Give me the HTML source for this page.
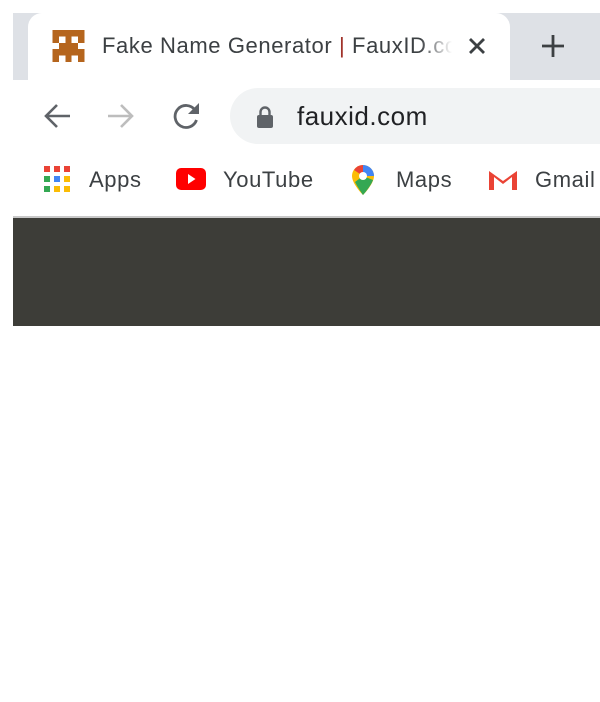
<!DOCTYPE html>
<html><head><style>
body{margin:0;width:600px;height:702px;background:#fff;position:relative;overflow:hidden;font-family:"Liberation Sans",sans-serif;}
.a{position:absolute}
.t{color:#3c4043;font-size:22px;white-space:nowrap;letter-spacing:0.6px}
</style></head><body>
<div class="a" style="left:13px;top:13px;width:587px;height:67px;background:#dee1e6"></div>
<div class="a" style="left:28px;top:13px;width:482px;height:67px;background:#fff;border-radius:14px 14px 0 0"></div>
<div class="a" style="left:13px;top:13px;width:15px;height:67px;background:#dee1e6;border-radius:0 0 14px 0"></div>
<div class="a" style="left:510px;top:13px;width:90px;height:67px;background:#dee1e6;border-radius:0 0 0 14px"></div>
<svg class="a" style="left:52px;top:30px" width="33" height="32" viewBox="0 0 5 5" shape-rendering="crispEdges"><g fill="#b5651d"><rect x="0" y="0" width="5" height="1"/><rect x="0" y="1" width="1" height="1"/><rect x="2" y="1" width="1" height="1"/><rect x="4" y="1" width="1" height="1"/><rect x="1" y="2" width="3" height="1"/><rect x="0" y="3" width="5" height="1"/><rect x="0" y="4" width="1" height="1"/><rect x="2" y="4" width="1" height="1"/><rect x="4" y="4" width="1" height="1"/></g></svg>
<div class="a t" style="left:102px;top:33px;width:350px;overflow:hidden;">Fake Name Generator <span style="color:#a0322a">|</span> FauxID.co</div>
<div class="a" style="left:420px;top:30px;width:32px;height:34px;background:linear-gradient(90deg,rgba(255,255,255,0),#fff)"></div>
<svg class="a" style="left:468px;top:37px" width="18" height="18" viewBox="0 0 18 18"><path d="M2 2L16 16M16 2L2 16" stroke="#3c4043" stroke-width="2.8"/></svg>
<svg class="a" style="left:541px;top:34px" width="24" height="24" viewBox="0 0 24 24"><path d="M12 1V23M1 12H23" stroke="#3c4043" stroke-width="2.8"/></svg>
<svg class="a" style="left:43px;top:103px" width="28" height="26" viewBox="0 0 28 26"><path d="M27 13H3M14 2L3 13L14 24" fill="none" stroke="#5f6368" stroke-width="2.6"/></svg>
<svg class="a" style="left:107px;top:103px" width="28" height="26" viewBox="0 0 28 26"><path d="M1 13H25M14 2L25 13L14 24" fill="none" stroke="#bdbdbd" stroke-width="2.6"/></svg>
<svg class="a" style="left:171px;top:101px" width="30" height="30" viewBox="0 0 30 30"><path d="M24 9A11 11 0 1 0 25.5 19" fill="none" stroke="#5f6368" stroke-width="2.8"/><path d="M28 2V13H17Z" fill="#5f6368"/></svg>
<div class="a" style="left:230px;top:88px;width:400px;height:56px;background:#f1f3f4;border-radius:28px"></div>
<svg class="a" style="left:256px;top:106px" width="18" height="22" viewBox="0 0 18 22"><path d="M4.5 9V6A4.5 4.5 0 0 1 13.5 6V9" fill="none" stroke="#5f6368" stroke-width="2.4"/><rect x="1" y="9" width="16" height="13" rx="2" fill="#5f6368"/></svg>
<div class="a t" style="left:297px;top:101px;font-size:26px;color:#202124;letter-spacing:0.5px">fauxid.com</div>
<svg class="a" style="left:44px;top:166px" width="26" height="26" viewBox="0 0 26 26"><g><rect x="0" y="0" width="6" height="6" fill="#ea4335"/><rect x="10" y="0" width="6" height="6" fill="#ea4335"/><rect x="20" y="0" width="6" height="6" fill="#ea4335"/><rect x="0" y="10" width="6" height="6" fill="#34a853"/><rect x="10" y="10" width="6" height="6" fill="#4285f4"/><rect x="20" y="10" width="6" height="6" fill="#fbbc05"/><rect x="0" y="20" width="6" height="6" fill="#34a853"/><rect x="10" y="20" width="6" height="6" fill="#fbbc05"/><rect x="20" y="20" width="6" height="6" fill="#fbbc05"/></g></svg>
<div class="a t" style="left:89px;top:167px">Apps</div>
<svg class="a" style="left:176px;top:168px" width="30" height="22" viewBox="0 0 30 22"><rect width="30" height="22" rx="5" fill="#ff0000"/><path d="M12 6L19.5 11L12 16Z" fill="#fff"/></svg>
<div class="a t" style="left:223px;top:167px">YouTube</div>
<svg class="a" style="left:351px;top:164px" width="24" height="32" viewBox="0 0 24 32"><path d="M12 1A11 11 0 0 0 1 12C1 20 12 31 12 31S23 20 23 12A11 11 0 0 0 12 1Z" fill="#fbbc05"/><path d="M12 1A11 11 0 0 1 23 12L12 12Z" fill="#4285f4"/><path d="M12 1A11 11 0 0 0 3 6L12 12Z" fill="#ea4335"/><path d="M4 18C7 24 12 31 12 31S20 22 22 16L12 12Z" fill="#34a853"/><circle cx="12" cy="12" r="4" fill="#fff"/></svg>
<div class="a t" style="left:396px;top:167px">Maps</div>
<svg class="a" style="left:488px;top:169px" width="30" height="22" viewBox="0 0 30 22"><path d="M1 2V21H6V8L15 15L24 8V21H29V2L15 12Z" fill="#ea4335"/></svg>
<div class="a t" style="left:535px;top:167px">Gmail</div>
<div class="a" style="left:13px;top:216px;width:587px;height:2px;background:#c8c8c8"></div>
<div class="a" style="left:13px;top:218px;width:587px;height:108px;background:#3d3d38"></div>
</body></html>
